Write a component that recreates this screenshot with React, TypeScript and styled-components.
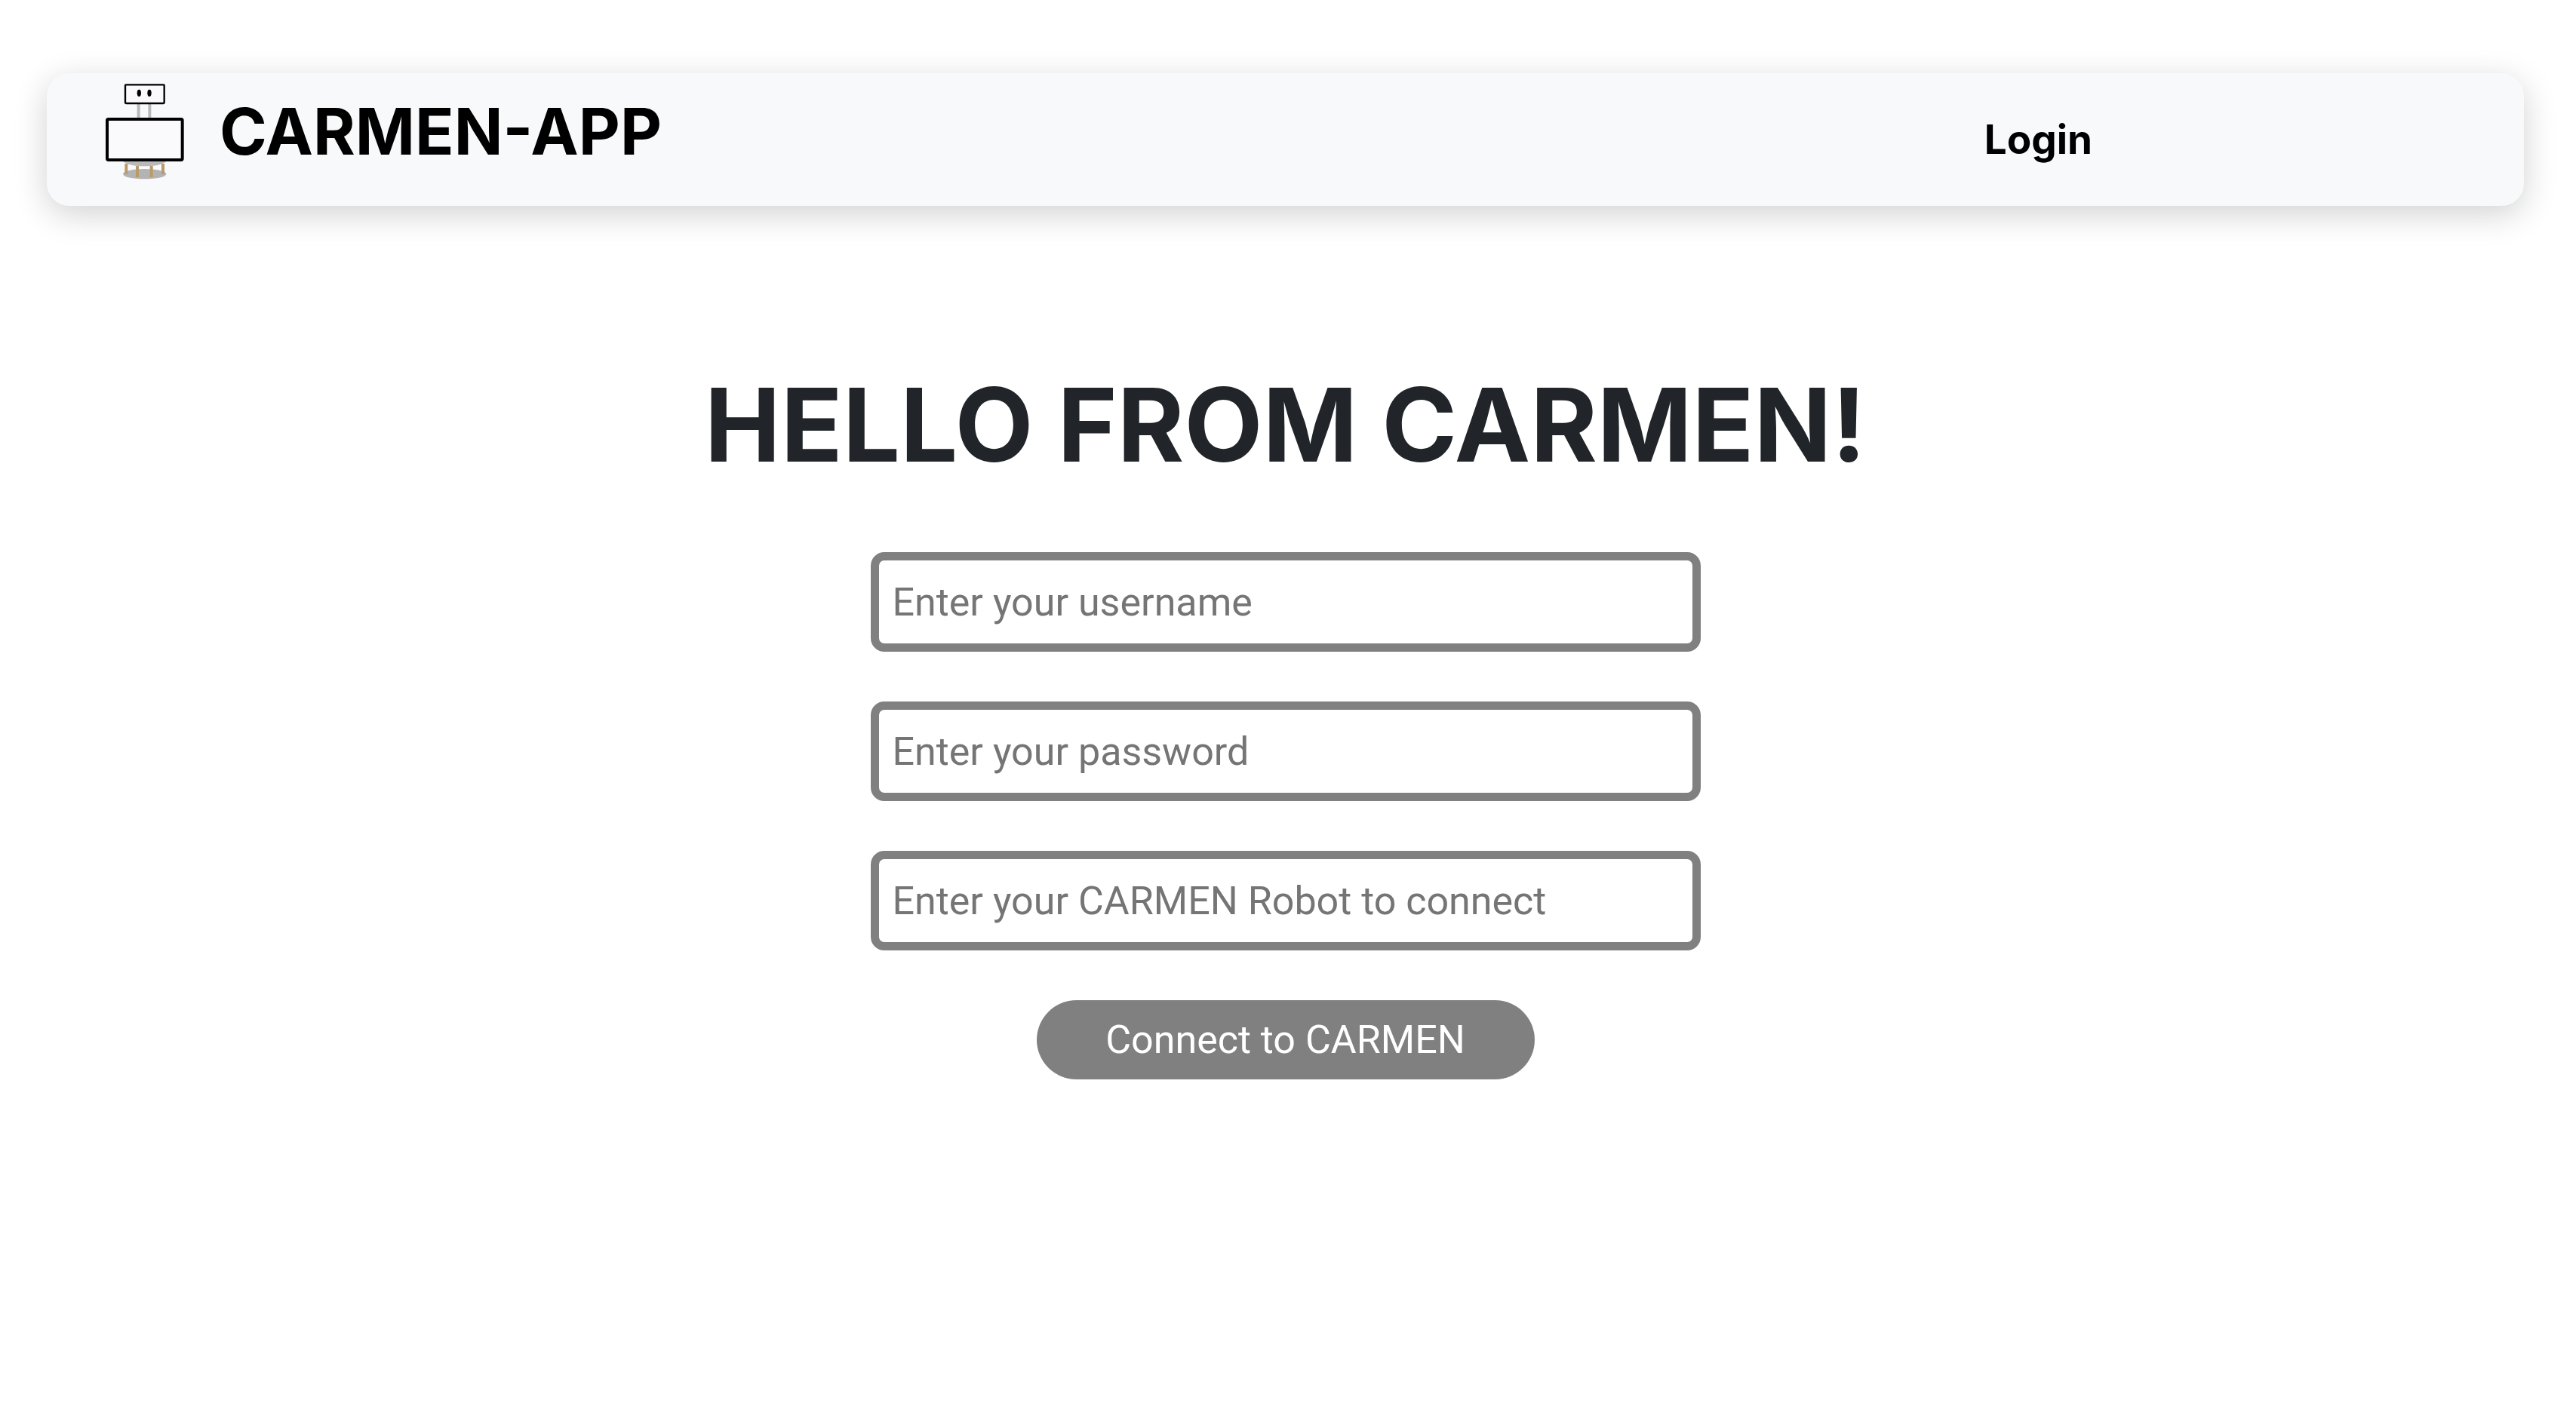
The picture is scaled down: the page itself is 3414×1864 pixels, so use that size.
import React from "react";
import styled, { createGlobalStyle } from "styled-components";

const GlobalStyle = createGlobalStyle`
  *, *::before, *::after { box-sizing: border-box; }
  body {
    margin: 0;
    background: #fff;
    color: #212529;
    font-family: Inter, "Liberation Sans", sans-serif;
  }
`;

const Page = styled.div`
  padding: 97px 69px 0 62px;
`;

const Navbar = styled.nav`
  display: flex;
  align-items: center;
  height: 176px;
  padding: 0 572px 0 78px;
  border-radius: 30px;
  background: #f8f9fa;
  box-shadow: 0 11px 44px rgba(0, 0, 0, 0.18);
`;

const Brand = styled.a`
  display: flex;
  align-items: center;
  gap: 47px;
  height: 155px;
  align-self: flex-start;
  color: #000;
  font-size: 85px;
  font-weight: 700;
  line-height: 130px;
  text-decoration: none;
`;

const NavLink = styled.a`
  margin-left: auto;
  color: #000;
  font-size: 53px;
  font-weight: 700;
  line-height: 80px;
  text-decoration: none;
`;

const Logo = styled.svg`
  flex: none;
  width: 104px;
  height: 127px;
`;

const Main = styled.main`
  display: flex;
  flex-direction: column;
  align-items: center;
  padding-top: 206px;
`;

const Title = styled.h1`
  margin: 0 0 85px;
  font-size: 135px;
  font-weight: 700;
  line-height: 168px;
`;

const Form = styled.form`
  display: flex;
  flex-direction: column;
  align-items: center;
  gap: 66px;
  width: 1100px;
  max-width: 100%;
  font-family: Roboto, "Liberation Sans", sans-serif;
`;

const Field = styled.input`
  width: 100%;
  height: 132px;
  padding: 0 18px;
  border: 11px solid #808080;
  border-radius: 18px;
  background: #fff;
  color: #212529;
  font: inherit;
  font-size: 52px;
  &::placeholder { color: #757575; opacity: 1; }
`;

const Submit = styled.button`
  width: 660px;
  max-width: 100%;
  height: 105px;
  padding: 0;
  border: 0;
  border-radius: 55px;
  background: #808080;
  color: #fff;
  font: inherit;
  font-size: 52px;
  cursor: pointer;
`;

const fields = [
  { name: "username", type: "text", hint: "Enter your username" },
  { name: "password", type: "password", hint: "Enter your password" },
  { name: "robot", type: "text", hint: "Enter your CARMEN Robot to connect" },
];

function RobotLogo() {
  return (
    <Logo viewBox="300 123 312 381" aria-hidden="true">
      <path d="M431 204v56M475 204v56" stroke="#b9b9b9" strokeWidth="12" />
      <rect x="378" y="127" width="155" height="74" rx="3" fill="#fafafc" stroke="#000" strokeWidth="7" />
      <ellipse cx="433" cy="160" rx="8" ry="14" />
      <ellipse cx="474" cy="160" rx="8" ry="14" />
      <ellipse cx="455" cy="482" rx="86" ry="20" fill="#b3b3b3" />
      <path d="M369 431h173c-12 13-48 20-87 20s-75-7-86-20z" fill="#b9b9b9" />
      <path d="M382 441v41M426 450v45M482 450v45M528 441v41" stroke="#b89b68" strokeWidth="12" />
      <rect x="306" y="264" width="299" height="162" rx="5" fill="#fafafc" stroke="#000" strokeWidth="12" />
    </Logo>
  );
}

export default function App() {
  return (
    <>
      <GlobalStyle />
      <Page>
        <Navbar>
          <Brand href="#">
            <RobotLogo />
            CARMEN-APP
          </Brand>
          <NavLink href="#login">Login</NavLink>
        </Navbar>
        <Main>
          <Title>HELLO FROM CARMEN!</Title>
          <Form>
            {fields.map((f) => (
              <Field key={f.name} name={f.name} type={f.type} placeholder={f.hint} aria-label={f.hint} />
            ))}
            <Submit type="button">Connect to CARMEN</Submit>
          </Form>
        </Main>
      </Page>
    </>
  );
}
